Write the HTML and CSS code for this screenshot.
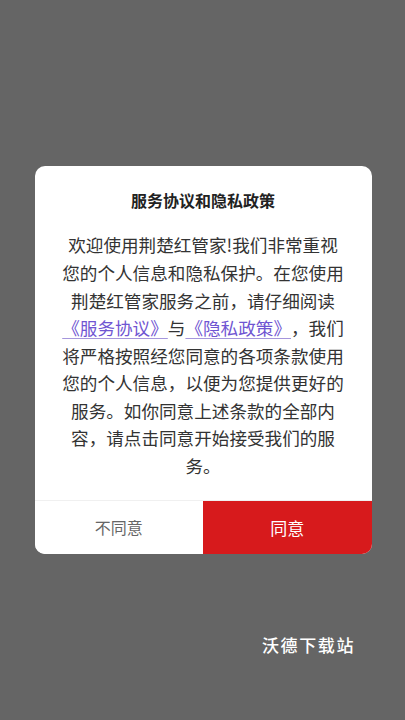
FILE: index.html
```html
<!DOCTYPE html>
<html lang="zh-CN">
<head>
  <meta charset="UTF-8">
  <meta name="viewport" content="width=device-width, initial-scale=1.0">
  <title>服务协议和隐私政策</title>
  <link rel="stylesheet" href="styles.css">
</head>
<body>
  <div class="dialog">
    <h2 class="dialog-title">服务协议和隐私政策</h2>
    <p class="dialog-text">欢迎使用荆楚红管家!我们非常重视您的个人信息和隐私保护。在您使用荆楚红管家服务之前，请仔细阅读<a href="#" class="link">《服务协议》</a>与<a href="#" class="link">《隐私政策》</a>，我们将严格按照经您同意的各项条款使用您的个人信息，以便为您提供更好的服务。如你同意上述条款的全部内容，请点击同意开始接受我们的服务。</p>
    <div class="dialog-actions">
      <button type="button" class="btn btn-cancel">不同意</button>
      <button type="button" class="btn btn-ok">同意</button>
    </div>
  </div>

  <div class="watermark">沃德下载站</div>
</body>
</html>
```

FILE: styles.css
```css
/* General Styles */
body {
  font-family: "Noto Sans CJK SC", "Noto Sans", sans-serif;
  background-color: #656565;
  margin: 0;
  padding: 0;
  display: flex;
  justify-content: center;
  align-items: center;
  min-height: 100vh;
}

.dialog {
  background: white;
  width: 337px;
  border-radius: 10px;
  overflow: hidden;
  padding-top: 23px;
  margin-left: 1px;
}

.dialog-title {
  margin: 0 0 20px;
  text-align: center;
  font-size: 16px;
  line-height: 22px;
  font-weight: bold;
  color: #222;
}

.dialog-text {
  margin: 0 0 20px;
  padding: 0 26.5px;
  text-align: center;
  font-size: 17.6px;
  line-height: 27.6px;
  color: #333;
  text-spacing-trim: space-all;
}

.link {
  color: #6f55d2;
  text-decoration: underline;
  text-decoration-color: #a596dc;
  text-underline-offset: 3px;
}

.dialog-actions {
  display: flex;
  height: 53px;
  border-top: 1px solid #f0f0f0;
}

.btn {
  flex: 1;
  border: none;
  margin: 0;
  font-family: inherit;
  cursor: pointer;
}

.btn-cancel {
  background: white;
  color: #666;
  font-size: 16px;
}

.btn-ok {
  background-color: #d71a1c;
  color: white;
  font-size: 17px;
}

.watermark {
  position: absolute;
  left: 262px;
  top: 632px;
  color: white;
  font-size: 17px;
  letter-spacing: 1.6px;
  font-weight: 500;
}
```
